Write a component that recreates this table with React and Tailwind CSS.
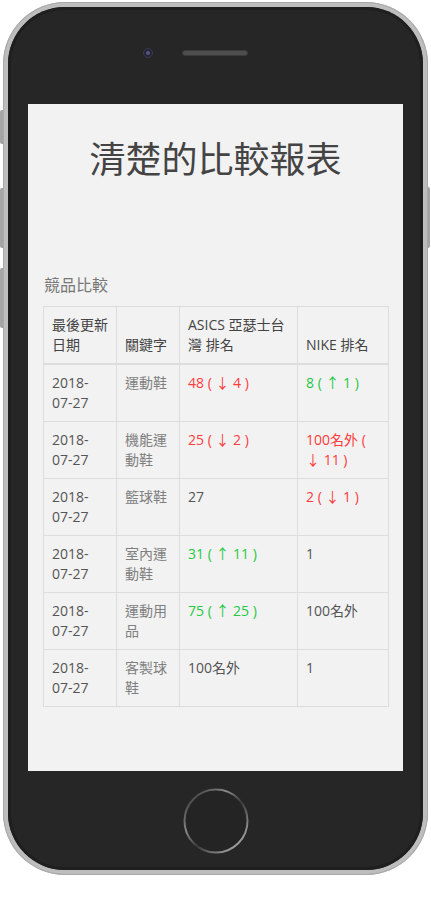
import React from 'react';

const rows = [
  { kw: '運動鞋', asics: '48 ( ↓ 4 )', asicsTone: 'down', nike: '8 ( ↑ 1 )', nikeTone: 'up' },
  { kw: '機能運動鞋', asics: '25 ( ↓ 2 )', asicsTone: 'down', nike: '100名外 ( ↓ 11 )', nikeTone: 'down' },
  { kw: '籃球鞋', asics: '27', asicsTone: '', nike: '2 ( ↓ 1 )', nikeTone: 'down' },
  { kw: '室內運動鞋', asics: '31 ( ↑ 11 )', asicsTone: 'up', nike: '1', nikeTone: '' },
  { kw: '運動用品', asics: '75 ( ↑ 25 )', asicsTone: 'up', nike: '100名外', nikeTone: '' },
  { kw: '客製球鞋', asics: '100名外', asicsTone: '', nike: '1', nikeTone: '' },
];

const toneClass = (tone) => {
  if (tone === 'down') return 'text-[#ff3b3b]';
  if (tone === 'up') return 'text-[#22c93f]';
  return 'text-[#555555]';
};

const HomeButton = () => (
  <svg width="68" height="68" viewBox="0 0 68 68">
    <defs>
      <linearGradient id="hb" x1="0" y1="0" x2="1" y2="1">
        <stop offset="0" stopColor="#262626" />
        <stop offset="0.35" stopColor="#8a8a8a" />
        <stop offset="0.55" stopColor="#3a3a3a" />
        <stop offset="0.85" stopColor="#9a9a9a" />
        <stop offset="1" stopColor="#5a5a5a" />
      </linearGradient>
    </defs>
    <circle cx="34" cy="34" r="31.5" fill="#242424" stroke="url(#hb)" strokeWidth="2" />
  </svg>
);

export default function App() {
  return (
    <div className="relative w-[431px] h-[910px] bg-white font-['Open_Sans','Noto_Sans_CJK_TC',sans-serif]">
      {/* side buttons */}
      <div className="absolute left-0 top-[110px] w-[4px] h-[34px] rounded-l-[2px] bg-[#a3a3a8]" />
      <div className="absolute left-0 top-[188px] w-[4px] h-[60px] rounded-l-[2px] bg-[#a3a3a8]" />
      <div className="absolute left-0 top-[268px] w-[4px] h-[60px] rounded-l-[2px] bg-[#a3a3a8]" />
      <div className="absolute left-[426px] top-[187px] w-[4px] h-[61px] rounded-r-[2px] bg-[#a3a3a8]" />

      <div className="absolute left-[3px] top-[2px] w-[425px] h-[873px] rounded-[62px] bg-[#bdbdbd] p-[5px] shadow-[inset_0_0_0_1px_#a8a8a8]">
        <div className="w-full h-full rounded-[57px] bg-[#262626] shadow-[inset_0_0_0_3px_#1f1f1f] flex flex-col items-center">
          <div className="h-[97px] w-full flex items-center gap-[29px] pl-[135px] pb-[6px]">
            <div className="w-[10px] h-[10px] rounded-full bg-[#252538] border border-[#3a3a50] flex items-center justify-center">
              <div className="w-[4px] h-[4px] rounded-full bg-[#55557a]" />
            </div>
            <div className="w-[66px] h-[6px] rounded-full bg-[#4e4e4e] border border-[#3a3a3a]" />
          </div>

          <div className="w-[375px] h-[667px] bg-[#f2f2f2] flex flex-col">
            <h1 className="mt-[36px] text-center text-[36px] leading-[40px] text-[#444444] font-normal">
              清楚的比較報表
            </h1>
            <div className="mt-[94px] ml-[16px] text-[16px] leading-[22px] text-[#777777]">競品比較</div>
            <table className="mt-[10px] ml-[15px] w-[345px] table-fixed border-collapse text-[14px] leading-[20px]">
              <colgroup>
                <col className="w-[73px]" />
                <col className="w-[63px]" />
                <col className="w-[118px]" />
                <col className="w-[91px]" />
              </colgroup>
              <thead>
                <tr className="text-[#444444]">
                  <th className="border border-[#dddddd] border-b-2 p-[8px] text-left align-bottom font-normal">最後更新日期</th>
                  <th className="border border-[#dddddd] border-b-2 p-[8px] text-left align-bottom font-normal">關鍵字</th>
                  <th className="border border-[#dddddd] border-b-2 p-[8px] text-left align-bottom font-normal">ASICS 亞瑟士台灣 排名</th>
                  <th className="border border-[#dddddd] border-b-2 p-[8px] text-left align-bottom font-normal">NIKE 排名</th>
                </tr>
              </thead>
              <tbody>
                {rows.map((r) => (
                  <tr key={r.kw}>
                    <td className="border border-[#dddddd] p-[8px] align-top text-[#555555]">2018-07-27</td>
                    <td className="border border-[#dddddd] p-[8px] align-top text-[#808080]">{r.kw}</td>
                    <td className={`border border-[#dddddd] p-[8px] align-top ${toneClass(r.asicsTone)}`}>{r.asics}</td>
                    <td className={`border border-[#dddddd] p-[8px] align-top ${toneClass(r.nikeTone)}`}>{r.nike}</td>
                  </tr>
                ))}
              </tbody>
            </table>
          </div>

          <div className="flex-1 w-full flex items-center justify-center pt-[1px]">
            <HomeButton />
          </div>
        </div>
      </div>
    </div>
  );
}
